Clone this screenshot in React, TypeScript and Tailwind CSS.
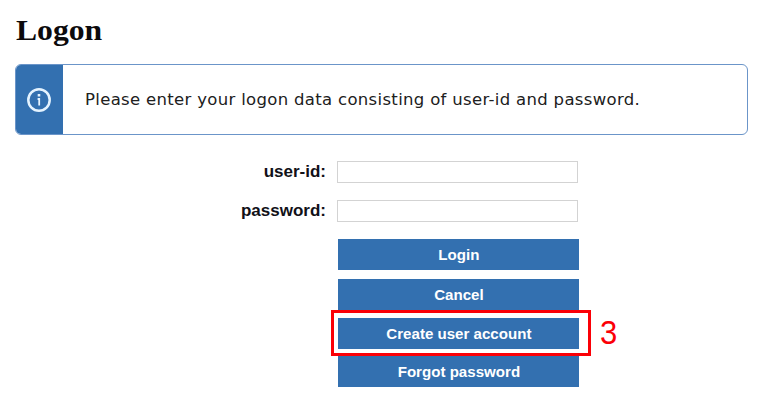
const buttonClass =
  "block h-[31px] w-[241px] bg-[#3370b0] text-center font-['Liberation_Sans',Arial,sans-serif] text-[15.1px] font-bold leading-[31px] text-white";

function InfoIcon() {
  return (
    <svg width="24" height="24" viewBox="0 0 24 24" fill="none" stroke="#e4f3ff">
      <circle cx="12" cy="12" r="10.7" strokeWidth="2.5" />
      <path d="M10.6 11H12.2V17.4" strokeWidth="1.8" />
      <path d="M12 6V8.4" strokeWidth="2.6" />
    </svg>
  );
}

function Field({ label, type }: { label: string; type: string }) {
  return (
    <label className="flex h-[22px] items-center">
      <span className="w-[326px] text-right font-['Liberation_Sans',Arial,sans-serif] text-[17px] font-bold leading-[22px] text-[#111118]">
        {label}
      </span>
      <input type={type} className="ml-[11px] h-[22px] w-[241px] border border-[#d3d3d3] bg-white outline-none" />
    </label>
  );
}

export default function App() {
  return (
    <main className="h-[403px] w-[768px] overflow-hidden bg-white">
      <h1 className="ml-[15.5px] h-[64px] w-fit origin-left scale-x-[1.055] pt-[13px] font-['Liberation_Serif','Times_New_Roman',serif] text-[30px] font-bold leading-[34px] text-[#0c0a0c]">
        Logon
      </h1>
      <section className="ml-[15px] flex h-[71px] w-[733px] overflow-hidden rounded-[6px] border border-[#6b95c9]">
        <div className="flex w-[46.5px] items-center justify-center bg-[#3370b0]">
          <InfoIcon />
        </div>
        <p className="whitespace-nowrap pl-[22.5px] font-['DejaVu_Sans',Verdana,sans-serif] text-[16.5px] leading-[69px] tracking-[0.32px] text-[#202020]">
          Please enter your logon data consisting of user-id and password.
        </p>
      </section>
      <form className="pt-[26px]">
        <div className="flex flex-col gap-[17px]">
          <Field label="user-id:" type="text" />
          <Field label="password:" type="password" />
        </div>
        <div className="ml-[338.4px] mt-[17px] flex w-[241px] flex-col">
          <button type="button" className={buttonClass}>Login</button>
          <button type="button" className={`${buttonClass} mt-[8.5px]`}>Cancel</button>
          <div className="relative mt-[8px]">
            <button type="button" className={buttonClass}>Create user account</button>
            <div className="pointer-events-none absolute -left-[7.4px] -top-[7.5px] h-[46px] w-[260px] border-[3px] border-[#fb0007]" />
            <span className="absolute left-[262px] top-[-3.5px] origin-left scale-x-[0.94] font-['Liberation_Sans',Arial,sans-serif] text-[33px] leading-[38px] text-[#fb0007]">
              3
            </span>
          </div>
          <button type="button" className={`${buttonClass} mt-[7.5px]`}>Forgot password</button>
        </div>
      </form>
    </main>
  );
}
